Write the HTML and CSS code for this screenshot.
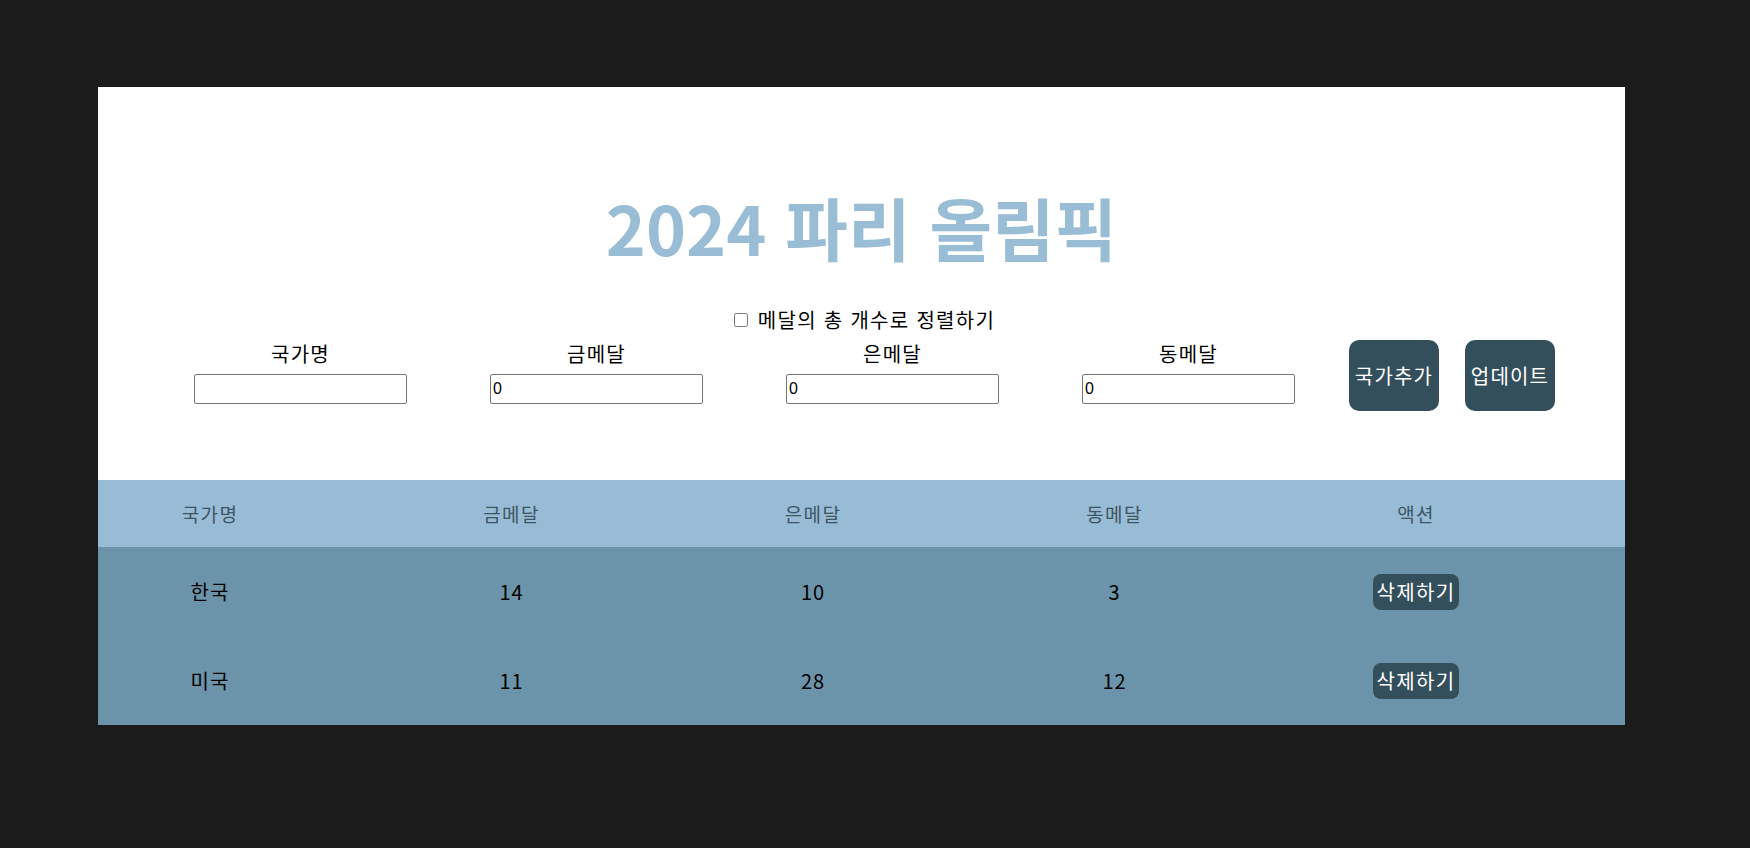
FILE: index.html
```html
<!DOCTYPE html>
<html lang="ko">
<head>
<meta charset="utf-8">
<title>2024 파리 올림픽</title>
<link rel="stylesheet" href="styles.css">
</head>
<body>
<div class="app">
  <h1 class="title">2024 파리 올림픽</h1>
  <label class="sort-toggle"><input type="checkbox" class="sort-check"><span>메달의 총 개수로 정렬하기</span></label>
  <form class="medal-form">
    <div class="field">
      <span class="field-label">국가명</span>
      <input type="text" class="field-input" value="">
    </div>
    <div class="field">
      <span class="field-label">금메달</span>
      <input type="number" class="field-input" value="0">
    </div>
    <div class="field">
      <span class="field-label">은메달</span>
      <input type="number" class="field-input" value="0">
    </div>
    <div class="field">
      <span class="field-label">동메달</span>
      <input type="number" class="field-input" value="0">
    </div>
    <div class="form-buttons">
      <button type="button" class="btn-main">국가추가</button>
      <button type="button" class="btn-main">업데이트</button>
    </div>
  </form>
  <div class="medal-table">
    <div class="row row-head">
      <div class="cell">국가명</div>
      <div class="cell">금메달</div>
      <div class="cell">은메달</div>
      <div class="cell">동메달</div>
      <div class="cell">액션</div>
    </div>
    <div class="row row-body">
      <div class="cell">한국</div>
      <div class="cell">14</div>
      <div class="cell">10</div>
      <div class="cell">3</div>
      <div class="cell"><button type="button" class="btn-delete">삭제하기</button></div>
    </div>
    <div class="row row-body">
      <div class="cell">미국</div>
      <div class="cell">11</div>
      <div class="cell">28</div>
      <div class="cell">12</div>
      <div class="cell"><button type="button" class="btn-delete">삭제하기</button></div>
    </div>
  </div>
</div>
</body>
</html>
```

FILE: styles.css
```css
html, body {
  margin: 0;
  padding: 0;
  background: #1b1b1b;
}

body {
  font-family: "Noto Sans CJK KR", "Noto Sans", sans-serif;
  color: #000;
}

.app {
  margin: 87px 0 0 98px;
  width: 1527px;
  background: #ffffff;
  padding-top: 100px;
  display: flex;
  flex-direction: column;
}

.title {
  margin: 0;
  font-size: 68px;
  line-height: 80px;
  font-weight: 700;
  color: #9abdd6;
  text-align: center;
}

.sort-toggle {
  margin-top: 40px;
  display: flex;
  justify-content: center;
  align-items: center;
  font-size: 20px;
  line-height: 26px;
  letter-spacing: 1.3px;
  padding-left: 6px;
}

.sort-check {
  width: 14px;
  height: 14px;
  margin: 0 10px 0 0;
}

.medal-form {
  display: flex;
  align-items: flex-start;
  padding: 7px 0 0 96px;
  gap: 83px;
}

.field {
  display: flex;
  flex-direction: column;
  align-items: center;
  margin-top: 1px;
  width: 213px;
}

.field-label {
  font-size: 20px;
  line-height: 26px;
  letter-spacing: 1.3px;
}

.field-input {
  margin-top: 7px;
  width: 213px;
  height: 30px;
  box-sizing: border-box;
  border: 1px solid #767676;
  border-radius: 2px;
  padding: 1px 2px;
  font-family: "Liberation Sans", sans-serif;
  font-size: 16px;
  color: #000;
  background: #fff;
}

.field-input::-webkit-outer-spin-button,
.field-input::-webkit-inner-spin-button {
  -webkit-appearance: none;
  margin: 0;
}

.form-buttons {
  display: flex;
  gap: 26px;
  margin-left: -29px;
}

.btn-main {
  width: 90px;
  height: 71px;
  padding: 0 3px;
  border: none;
  border-radius: 10px;
  background: #344f5c;
  color: #ffffff;
  font-family: "Noto Sans CJK KR", "Noto Sans", sans-serif;
  font-size: 20px;
  line-height: 26px;
  letter-spacing: 1.2px;
}

.medal-table {
  margin-top: 69px;
  display: flex;
  flex-direction: column;
}

.row {
  display: grid;
  grid-template-columns: repeat(5, 301.5px);
  align-items: center;
}

.row-head {
  height: 67px;
  background: #98bbd6;
  color: #3e5564;
  font-size: 19px;
  letter-spacing: 1.3px;
}

.row-body {
  height: 89px;
  background: #6b94ab;
  color: #000;
  font-size: 20px;
  letter-spacing: 1px;
}

.cell {
  padding-right: 77.5px;
  text-align: center;
  line-height: 26px;
}

.btn-delete {
  padding: 5px 4px;
  border: none;
  border-radius: 8px;
  background: #344f5c;
  color: #ffffff;
  font-family: "Noto Sans CJK KR", "Noto Sans", sans-serif;
  font-size: 20px;
  line-height: 26px;
  letter-spacing: 1.3px;
}
```
